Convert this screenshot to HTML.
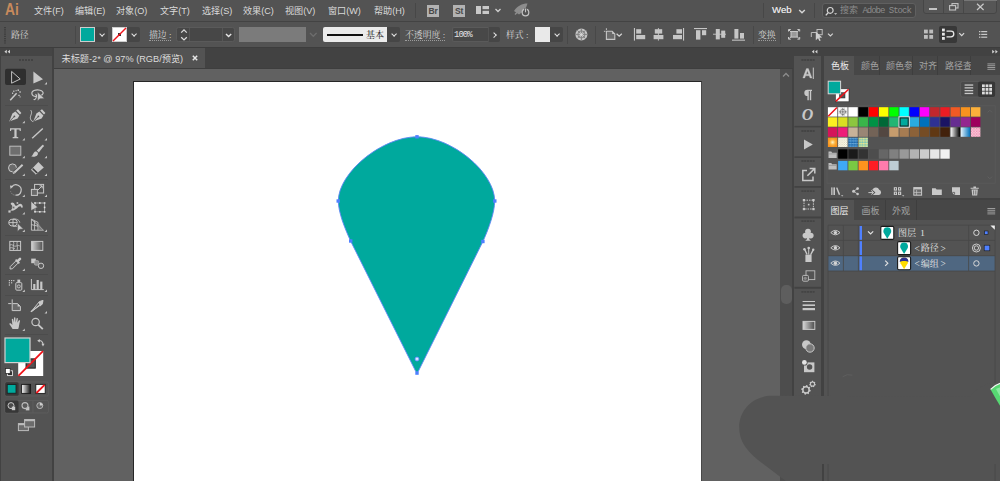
<!DOCTYPE html>
<html lang="zh-CN">
<head>
<meta charset="utf-8">
<title>未标题-2* @ 97% (RGB/预览)</title>
<style>
*{box-sizing:border-box;margin:0;padding:0}
html,body{width:1000px;height:481px;overflow:hidden;background:#535353}
body{position:relative;font-family:"Liberation Sans","Noto Sans CJK SC",sans-serif;font-size:10px;color:#d6d6d6;line-height:1}
.abs{position:absolute}
.t{position:absolute;white-space:nowrap;line-height:12px;height:12px}
/* bars */
#menubar{left:0;top:0;width:1000px;height:21px;background:#535353}
#line1{left:0;top:21px;width:1000px;height:1px;background:#434343}
#ctrlbar{left:0;top:22px;width:1000px;height:25px;background:#535353}
#line2{left:0;top:47px;width:1000px;height:1px;background:#3d3d3d}
#tabrow{left:54px;top:48px;width:741px;height:21px;background:#424242}
#tab{left:54px;top:48px;width:151px;height:21px;background:#535353}
#canvas{left:54px;top:69px;width:727px;height:412px;background:#616161}
#artboard{left:133px;top:81px;width:569.2px;height:410px;background:#fff;border:1px solid #262626;border-right-color:#484848}
#vscroll{left:780.4px;top:69px;width:11.9px;height:413px;background:#4d4d4d}
#vthumb{left:781.2px;top:285px;width:10.4px;height:19px;border-radius:5px;background:#5e5e5e}
/* left toolbar */
#tb-edge{left:0;top:48px;width:54px;height:433px;background:#424242}
#tb-head{left:0;top:48px;width:52px;height:8px;background:#454545}
#tb{left:1px;top:56px;width:51px;height:425px;background:#535353}
.sep{position:absolute;left:5px;width:43px;height:1px;background:#4a4a4a}
/* right dock */
#dock{left:792.2px;top:48px;width:207.8px;height:433px;background:#424242}
#strip{left:794.4px;top:56px;width:26.8px;height:344px;background:#535353}
.sdiv{position:absolute;left:795px;width:27px;height:1px;background:#424242}
#pnl1{left:823.6px;top:56px;width:176.4px;height:142px;background:#535353}
#pnl2{left:823.6px;top:200.4px;width:176.4px;height:281px;background:#535353}
.ptabs{position:absolute;left:823.6px;width:176.4px;height:19px;background:#474747}
.ptab{position:absolute;height:19px;border-right:1px solid #3f3f3f;color:#a9a9a9}
.ptab.on{background:#535353;color:#e6e6e6;border-right:none}
.sw{position:absolute;width:9.4px;height:9.4px}
.ico{position:absolute;overflow:visible}
.mi{top:5px;font-size:9.1px;color:#dadada}
.brst{top:5px;width:12px;height:12px;background:#b2b2b2;color:#484848;font-size:8.5px;font-weight:bold;line-height:12px;text-align:center;letter-spacing:-0.3px}
.wc{top:0;height:14px;background:#4f4f4f;border:1px solid #686868;border-top:none}
.ct{top:29.2px;font-size:8.9px;color:#d6d6d6;font-family:'Liberation Serif','Noto Serif CJK SC',serif}
.ul{border-bottom:1px dotted #9c9c9c;height:11.4px}
.vd{top:26px;width:1px;height:18px;background:#484848}
.dd{top:27.4px;width:13px;height:15px;background:#464646;border-radius:0 2px 2px 0}
.dd::after{content:"";position:absolute;left:4.6px;top:4.4px;width:3.2px;height:3.2px;border-right:1.4px solid #e4e4e4;border-bottom:1.4px solid #e4e4e4;transform:rotate(45deg)}
.fld{top:27.4px;height:15px;background:#484848;border:1px solid #5a5a5a;border-right:none;border-radius:2px 0 0 2px}
.pdv{width:1px;height:19px;background:#3e3e3e}
.pt{font-size:9px;color:#a2a2a2}
.pt.on{color:#ececec}
.lt{font-size:9px;color:#e6e6e6;font-family:'Liberation Serif','Noto Serif CJK SC',serif}
.dd.r::after{left:2.6px;top:5.2px;transform:rotate(-45deg)}
.br{font-size:11px;line-height:9px;display:inline-block;transform:scaleX(0.85);position:relative;top:0.9px}
</style>
</head>
<body>
<!-- ===== top bars ===== -->
<div id="menubar" class="abs"></div>
<div id="line1" class="abs"></div>
<div id="ctrlbar" class="abs"></div>
<div id="line2" class="abs"></div>

<!-- ===== document area ===== -->
<div id="tabrow" class="abs"></div>
<div id="tab" class="abs"></div>
<div id="canvas" class="abs"></div>
<div id="artboard" class="abs"></div>
<div id="vscroll" class="abs"></div>
<div id="vthumb" class="abs"></div>

<!-- ===== left toolbar ===== -->
<div id="tb-edge" class="abs"></div>
<div id="tb-head" class="abs"></div>
<div id="tb" class="abs"></div>

<!-- ===== right dock ===== -->
<div id="dock" class="abs"></div>
<div id="strip" class="abs"></div>
<div id="pnl1" class="abs"></div>
<div id="pnl2" class="abs"></div>

<div class="t" style="left:5px;top:0px;font-size:16px;font-weight:bold;line-height:20px;height:20px;color:#c88a5c;transform:scaleX(0.86);transform-origin:0 0">Ai</div>
<div id="m1" class="t mi" style="left:34px">文件(F)</div>
<div class="t mi" style="left:75px">编辑(E)</div>
<div class="t mi" style="left:116px">对象(O)</div>
<div class="t mi" style="left:160px">文字(T)</div>
<div class="t mi" style="left:202px">选择(S)</div>
<div class="t mi" style="left:243px">效果(C)</div>
<div class="t mi" style="left:285px">视图(V)</div>
<div class="t mi" style="left:328px">窗口(W)</div>
<div class="t mi" style="left:374px">帮助(H)</div>
<div class="abs" style="left:415px;top:3px;width:1px;height:15px;background:#474747"></div>
<div class="abs brst" style="left:427px">Br</div>
<div class="abs brst" style="left:453px">St</div>
<svg class="ico" style="left:476px;top:6px" width="26" height="10" viewBox="0 0 26 10"><rect x="0" y="0" width="5" height="8" fill="#c8c8c8"/><rect x="6.5" y="0" width="6.5" height="3.2" fill="#c8c8c8"/><rect x="6.5" y="4.8" width="6.5" height="3.2" fill="#c8c8c8"/><path d="M19.5 3 L22 5.5 L24.5 3" fill="none" stroke="#d0d0d0" stroke-width="1.3"/></svg>
<svg class="ico" style="left:512.5px;top:2.2px" width="20" height="16" viewBox="0 0 20 16"><path d="M1 9 C4 4 9 1.5 14.5 1.5 C13.5 6 10.5 10 6 12.5 Z" fill="#8d8d8d"/><path d="M2 12.5 L5.5 9" stroke="#8d8d8d" stroke-width="1.4"/><circle cx="12.5" cy="10.5" r="3.3" fill="#535353" stroke="#c4c4c4" stroke-width="1.2"/><path d="M12.5 6.3 V10.3" stroke="#535353" stroke-width="2.6"/><path d="M12.5 6.6 V10.3" stroke="#c4c4c4" stroke-width="1.1"/></svg>
<div class="abs" style="left:763px;top:3px;width:1px;height:15px;background:#474747"></div>
<div class="t" style="left:772px;top:3.8px;font-size:9.6px;color:#e0e0e0;text-shadow:0 0 0.4px #e0e0e0">Web</div>
<svg class="ico" style="left:798px;top:9px" width="9" height="6" viewBox="0 0 9 6"><path d="M1.2 1 L4 3.8 L6.8 1" fill="none" stroke="#d6d6d6" stroke-width="1.4"/></svg>
<div class="abs" style="left:814px;top:3px;width:1px;height:15px;background:#474747"></div>
<div class="abs" style="left:821.6px;top:3px;width:94.6px;height:14.6px;background:#464646;border:1px solid #606060;border-radius:3px"></div>
<svg class="ico" style="left:824.6px;top:5.6px" width="13" height="11" viewBox="0 0 13 11"><circle cx="5.2" cy="4.4" r="2.9" fill="none" stroke="#d6d6d6" stroke-width="1.2"/><path d="M3.2 6.6 L0.8 9.4" stroke="#d6d6d6" stroke-width="1.4"/><path d="M9 7.2 L10.6 8.8 L12.2 7.2" fill="#d6d6d6"/></svg>
<div id="srch" class="t" style="left:840px;top:5px;font-size:9px;color:#8c8c8c;font-family:'Liberation Mono','Noto Sans CJK SC',monospace;letter-spacing:-1px"><span style="letter-spacing:0">搜索</span> Adobe Stock</div>
<div class="abs" style="left:922.8px;top:-1px;width:74.6px;height:15px;background:#565656;border:1px solid #464646;border-radius:0 0 3px 3px"></div>
<div class="abs" style="left:943px;top:0;width:1px;height:13px;background:#474747"></div>
<div class="abs" style="left:962.6px;top:0;width:1px;height:13px;background:#474747"></div>
<div class="abs" style="left:963.6px;top:0;width:33px;height:1.2px;background:#767676"></div>
<div class="abs" style="left:929px;top:8.2px;width:7.6px;height:1.9px;background:#c4c4c4"></div>
<svg class="ico" style="left:948.6px;top:3.4px" width="10" height="8" viewBox="0 0 10 8"><rect x="3" y="0.6" width="6" height="4.4" fill="none" stroke="#c4c4c4" stroke-width="1.1"/><rect x="0.6" y="2.6" width="6" height="4.4" fill="#565656" stroke="#c4c4c4" stroke-width="1.1"/></svg>
<svg class="ico" style="left:976px;top:3px" width="9" height="8" viewBox="0 0 9 8"><path d="M1 0.8 L7.6 7 M7.6 0.8 L1 7" stroke="#c8c8c8" stroke-width="1.2"/></svg>
<svg class="ico" style="left:4px;top:27px" width="3" height="17" viewBox="0 0 3 17"><path d="M1 0 V17" stroke="#3e3e3e" stroke-width="2" stroke-dasharray="1.2 1"/></svg>
<div class="t ct" style="left:11px">路径</div>
<div class="abs vd" style="left:75px"></div>
<div class="abs" style="left:80px;top:27.4px;width:15px;height:15px;background:#00a99d;border:1px solid #cdcdcd"></div>
<div class="abs dd" style="left:95px"></div>
<div class="abs" style="left:112px;top:27.4px;width:15px;height:15px;background:#fff;border:1px solid #cdcdcd"></div>
<svg class="ico" style="left:112px;top:27.4px" width="15" height="15" viewBox="0 0 15 15"><rect x="6" y="6" width="3" height="3" fill="#333"/><path d="M1 14 L14 1" stroke="#f0131a" stroke-width="1.5"/></svg>
<div class="abs dd" style="left:127px"></div>
<div class="t ct ul" style="left:149px">描边 :</div>
<div class="abs" style="left:176.3px;top:27.4px;width:58.9px;height:15px;background:#474747;border:1px solid #5a5a5a;border-radius:2.5px"></div>
<div class="abs" style="left:189.2px;top:28.4px;width:1px;height:13px;background:#565656"></div>
<div class="abs" style="left:222.2px;top:28.4px;width:1px;height:13px;background:#565656"></div>
<svg class="ico" style="left:179.6px;top:28.4px" width="8" height="15" viewBox="0 0 8 15"><path d="M1.2 4.6 L4 1.9 L6.8 4.6 M1.2 9.2 L4 11.9 L6.8 9.2" fill="none" stroke="#dcdcdc" stroke-width="1.3"/></svg>
<svg class="ico" style="left:224.6px;top:32.6px" width="8" height="6" viewBox="0 0 8 6"><path d="M1 1 L3.6 3.6 L6.2 1" fill="none" stroke="#e4e4e4" stroke-width="1.4"/></svg>
<div class="abs" style="left:239px;top:27.4px;width:67px;height:15px;background:#7b7b7b"></div>
<svg class="ico" style="left:309px;top:32.4px" width="9" height="6" viewBox="0 0 9 6"><path d="M1 1 L4.3 4.3 L7.6 1" fill="none" stroke="#6d6d6d" stroke-width="1.3"/></svg>
<div class="abs" style="left:323px;top:27.4px;width:64px;height:15px;background:#ebebeb;border-radius:2px 0 0 2px"></div>
<div class="abs" style="left:327px;top:34.2px;width:36px;height:2px;background:#111"></div>
<div class="t" style="left:366px;top:29.2px;font-size:9px;color:#222;font-family:'Liberation Serif','Noto Serif CJK SC',serif">基本</div>
<div class="abs dd" style="left:387px"></div>
<div class="t ct ul" style="left:405px">不透明度 :</div>
<div class="abs fld" style="left:452px;width:36px"></div>
<div class="t" style="left:454px;top:28.6px;font-size:9px;color:#e2e2e2;font-family:'Liberation Mono',monospace;letter-spacing:-1px">100%</div>
<div class="abs dd r" style="left:489px;width:11px"></div>
<div class="t ct" style="left:506px">样式 :</div>
<div class="abs" style="left:535px;top:27.4px;width:15px;height:15px;background:#e9e9e9"></div>
<div class="abs dd" style="left:550px"></div>
<div class="abs vd" style="left:567px"></div>
<div class="abs vd" style="left:595px"></div>
<div class="t ct ul" style="left:758px">变换</div>
<div class="abs vd" style="left:753px"></div><div class="abs vd" style="left:780px"></div>
<div class="abs" style="left:939.4px;top:26px;width:18px;height:16.6px;background:#383838;border-radius:2px"></div>

<div id="tabtxt" class="t" style="left:61.5px;top:52.6px;font-size:9.2px;color:#dcdcdc">未标题-2* @ 97% (RGB/预览)</div>
<svg class="ico" style="left:192px;top:55px" width="6" height="6" viewBox="0 0 6 6"><path d="M0.8 0.8 L5.2 5.2 M5.2 0.8 L0.8 5.2" stroke="#e6e6e6" stroke-width="1.5"/></svg>
<div class="abs" style="left:54px;top:68px;width:739px;height:1px;background:#3e3e3e"></div>
<svg class="ico" style="left:782.4px;top:72px" width="8" height="6" viewBox="0 0 8 6"><path d="M1 4.5 L4 1.5 L7 4.5" fill="none" stroke="#8c8c8c" stroke-width="1.3"/></svg>

<svg class="abs" style="left:0;top:0" width="1000" height="481" viewBox="0 0 1000 481">
<path d="M417 136.8 C452 136.8 494.7 172.5 494.7 201 C494.7 212 489 228 483 241.3 L418.2 371.5 Q417 373.4 415.8 371.5 L350.6 241 C344.6 228 338.3 212 338.3 201 C338.3 172.5 382 136.8 417 136.8 Z" fill="#00a99d" stroke="#5d86f5" stroke-width="0.9"/>
<g fill="#4f80ff">
<rect x="415.3" y="135.1" width="3.4" height="3.4"/>
<rect x="336.5" y="199.3" width="3.4" height="3.4"/>
<rect x="493.1" y="199.3" width="3.4" height="3.4"/>
<rect x="349" y="239.3" width="3.4" height="3.4"/>
<rect x="481.2" y="239.8" width="3.4" height="3.4"/>
<rect x="415.3" y="371.4" width="3.4" height="3.4"/>
</g>
<circle cx="417" cy="359" r="2" fill="#fff" stroke="#4f80ff" stroke-width="0.9"/>
<circle cx="417" cy="359" r="0.6" fill="#4f80ff"/>
</svg>
<svg class="ico" style="left:560px;top:20px" width="440" height="30" viewBox="560 20 440 30">
<!-- globe -->
<circle cx="581.4" cy="34.4" r="6" fill="#c4c4c4"/>
<g stroke="#7d7d7d" stroke-width="0.9" fill="none"><circle cx="581.4" cy="34.4" r="3.6"/><path d="M575.4 34.4 H587.4 M581.4 28.4 V40.4 M577.2 30.2 L585.6 38.6 M585.6 30.2 L577.2 38.6"/></g>
<circle cx="581.4" cy="34.4" r="1.5" fill="#d8d8d8"/>
<!-- artboard -->
<path d="M606.4 31.3 H612.2 L614.8 33.9 V39.4 H606.4 Z" fill="#6b6b6b" stroke="#c6c6c6" stroke-width="1.1"/>
<path d="M612.2 31.3 V33.9 H614.8 Z" fill="#c6c6c6"/>
<rect x="605.9" y="28.2" width="1" height="1.8" fill="#bdbdbd"/><rect x="603.9" y="30.8" width="1.5" height="1" fill="#bdbdbd"/>
<path d="M616.6 33.8 L619.2 36.2 L621.8 33.8" fill="none" stroke="#d4d4d4" stroke-width="1.3"/>
<!-- align icons -->
<g fill="#c6c6c6">
<rect x="633.9" y="28" width="1.1" height="12.6"/><rect x="636.2" y="29.2" width="5" height="4.4"/><rect x="636.2" y="35" width="9" height="4.2"/>
<rect x="657.9" y="28" width="1.1" height="12.6" fill="#b0b0b0"/><rect x="654.8" y="29.2" width="7.4" height="4.4"/><rect x="653.6" y="35" width="9.8" height="4.2"/>
<rect x="683" y="28" width="1.1" height="12.6"/><rect x="676.4" y="29.2" width="5.6" height="4.4"/><rect x="673" y="35" width="9" height="4.2"/>
<rect x="694" y="28" width="13" height="1.1"/><rect x="696" y="30.2" width="4.4" height="9.4"/><rect x="702" y="30.2" width="4.2" height="5"/>
<rect x="713" y="33.7" width="13" height="1.1" fill="#b0b0b0"/><rect x="715.8" y="29" width="4" height="10.4"/><rect x="721.2" y="30.6" width="4" height="7.2"/>
<rect x="732" y="39.6" width="13" height="1.1"/><rect x="734.4" y="29" width="4" height="9.6"/><rect x="740" y="33" width="4" height="5.6"/>
</g>
<!-- isolate -->
<g fill="none" stroke="#c9c9c9" stroke-width="1"><rect x="791" y="31.5" width="6.2" height="5.6" fill="#9a9a9a"/><path d="M788.5 31.5 V29.5 H790.8 M797.4 29.5 H799.7 V31.5 M788.5 37 V39.2 H790.8 M797.4 39.2 H799.7 V37 M789 30 L791 32 M799.2 30 L797.2 32 M789 38.7 L791 36.8 M799.2 38.7 L797.2 36.8"/></g>
<!-- select similar -->
<g fill="none" stroke="#bcbcbc" stroke-width="1"><rect x="817" y="29.5" width="5.2" height="5.2"/><path d="M811.3 32.5 H816.5 M811.3 32.5 V37"/></g>
<path d="M815.8 31.6 V40.2 L818 38.2 L819.4 41 L820.7 40.4 L819.4 37.7 L822.2 37.6 Z" fill="#cfcfcf"/>
<path d="M828 33.6 L830.4 36 L832.8 33.6" fill="none" stroke="#d4d4d4" stroke-width="1.2"/>
<!-- right icons -->
<g fill="#bdbdbd"><rect x="924" y="29.6" width="3.8" height="3.8"/><rect x="929.3" y="29.6" width="3.8" height="3.8"/><rect x="924" y="35" width="3.8" height="3.8"/><rect x="929.3" y="35" width="3.8" height="3.8"/></g>
<g fill="#e8e8e8"><rect x="942" y="28.6" width="2.8" height="2.8"/><rect x="942" y="32.8" width="2.8" height="2.8"/><rect x="942" y="37" width="2.8" height="2.8"/></g>
<path d="M946.5 31.2 H951 A2.8 2.8 0 0 1 951 36.8 H946.5" fill="none" stroke="#e8e8e8" stroke-width="1.3"/>
<path d="M959.3 33.2 L961.7 35.6 L964.1 33.2" fill="none" stroke="#d8d8d8" stroke-width="1.2"/>
<g fill="#c9c9c9"><rect x="979" y="31" width="1.4" height="1.2"/><rect x="981.2" y="31" width="6" height="1.2"/><rect x="979" y="33.8" width="1.4" height="1.2"/><rect x="981.2" y="33.8" width="6" height="1.2"/><rect x="979" y="36.6" width="1.4" height="1.2"/><rect x="981.2" y="36.6" width="6" height="1.2"/></g>
</svg>
<svg class="ico" style="left:0;top:0" width="56" height="481" viewBox="0 0 56 481">
<!-- header -->
<path d="M6.8 49.8 L4.4 51.7 L6.8 53.6 Z M10 49.8 L7.6 51.7 L10 53.6 Z" fill="#d2d2d2"/>
<path d="M19 60 H33" stroke="#434343" stroke-width="2" stroke-dasharray="2 1"/>
<!-- separators -->
<g stroke="#4c4c4c" stroke-width="1"><path d="M5 105.5 H48 M5 179.5 H48 M5 235.5 H48 M5 274.5 H48 M5 295.5 H48 M5 334.5 H48"/></g>
<!-- selected bg -->
<rect x="5" y="68.8" width="21" height="16.2" rx="2" fill="#2f2f2f"/>
<g fill="#c4c4c4">
<path d="M47 84.6 H44.5 L47 82.1 Z"/><path d="M24.8 123.2 H22.3 L24.8 120.7 Z"/><path d="M24.8 140.6 H22.3 L24.8 138.1 Z"/><path d="M47 140.6 H44.5 L47 138.1 Z"/><path d="M24.8 158.3 H22.3 L24.8 155.8 Z"/><path d="M47 158.3 H44.5 L47 155.8 Z"/><path d="M24.8 176 H22.3 L24.8 173.5 Z"/><path d="M47 176 H44.5 L47 173.5 Z"/>
<path d="M24.8 197 H22.3 L24.8 194.5 Z"/><path d="M47 197 H44.5 L47 194.5 Z"/><path d="M24.8 214.4 H22.3 L24.8 211.9 Z"/><path d="M24.8 232 H22.3 L24.8 229.5 Z"/><path d="M47 232 H44.5 L47 229.5 Z"/><path d="M24.8 271 H22.3 L24.8 268.5 Z"/><path d="M24.8 292 H22.3 L24.8 289.5 Z"/><path d="M47 292 H44.5 L47 289.5 Z"/><path d="M47 313.6 H44.5 L47 311.1 Z"/><path d="M24.8 331 H22.3 L24.8 328.5 Z"/>
</g>
<!-- selection tool -->
<path d="M11.6 71.4 V83.2 L20.2 79 Z" fill="none" stroke="#c2c2c2" stroke-width="1" stroke-linejoin="round"/>
<!-- direct selection -->
<path d="M33.4 71.4 V83.6 L43 79.2 Z" fill="#c8c8c8"/>
<!-- magic wand -->
<path d="M10.2 100.2 L16.6 93.2" stroke="#c8c8c8" stroke-width="1.5"/>
<g fill="#dadada"><rect x="13.2" y="90.6" width="1.2" height="1.2"/><rect x="12" y="92.6" width="1.2" height="1.2"/><rect x="17.6" y="89.4" width="1.2" height="1.6"/><rect x="19.4" y="91.4" width="1.4" height="1.2"/><rect x="18.4" y="94.8" width="1.2" height="1.2"/><rect x="15.6" y="90.2" width="1" height="1"/><rect x="19.6" y="96.4" width="1" height="1"/></g>
<!-- lasso -->
<path d="M36 96.6 C31.5 96.4 30.4 92.4 34 90.6 C37.6 89 43.4 90.2 43.2 93.2 C43 94.6 41.6 95.4 40 95.8 M35.4 94.4 C36.6 94.6 36.8 96 36.2 97.6 C35.8 99 34.6 100 33.6 99.4" fill="none" stroke="#c8c8c8" stroke-width="1.1"/>
<path d="M37.6 92 V101 L39.8 98.8 L44.4 98.6 Z" fill="#c8c8c8" stroke="#535353" stroke-width="0.5"/>
<!-- pen -->
<g><path d="M9.2 121.6 L12.4 113.4 L15.4 111.4 L19.4 115.6 L17.6 118.6 Z" fill="#c8c8c8"/><path d="M9.6 121.2 L14 116.8" stroke="#535353" stroke-width="0.9"/><circle cx="14.4" cy="116.4" r="0.9" fill="#535353"/><path d="M16.2 110.6 L18 109.2 L21.4 113 L20 114.6 Z" fill="#c8c8c8"/></g>
<g transform="translate(24 0)"><path d="M9.2 121.6 L12.4 113.4 L15.4 111.4 L19.4 115.6 L17.6 118.6 Z" fill="#c8c8c8"/><path d="M9.6 121.2 L14 116.8" stroke="#535353" stroke-width="0.9"/><circle cx="14.4" cy="116.4" r="0.9" fill="#535353"/><path d="M16.2 110.6 L18 109.2 L21.4 113 L20 114.6 Z" fill="#c8c8c8"/></g>
<path d="M30.8 110.2 C33 113.2 29.8 115.6 30.4 118.4 C30.8 120.4 32 121.4 33.2 121.6" fill="none" stroke="#c8c8c8" stroke-width="1"/>
<!-- T -->
<path d="M10 128.2 H20.8 V131 H19.8 L19.4 129.6 H16.6 V136.8 L18.3 137.3 V138.3 H12.6 V137.3 L14.4 136.8 V129.6 H11.4 L11 131 H10 Z" fill="#c8c8c8"/>
<!-- line -->
<path d="M32.2 138.2 L42.8 128.4" stroke="#c8c8c8" stroke-width="1.4"/>
<!-- rect -->
<rect x="9.8" y="146.2" width="11" height="9" fill="#6e6e6e" stroke="#bdbdbd" stroke-width="1"/>
<!-- brush -->
<path d="M36.8 150.4 L42.6 144.8 Q44 144.6 43.6 146.2 L38.8 152.6 Z" fill="#c8c8c8"/>
<path d="M31.2 156.6 C33 155.8 33 152.8 35 151.6 C36.8 150.8 38.6 152.6 37.8 154.4 C36.6 156.8 33.4 157 31.2 156.6 Z" fill="#c8c8c8"/>
<!-- shaper -->
<circle cx="12.5" cy="167.9" r="4" fill="#6a6a6a" stroke="#c8c8c8" stroke-width="1"/>
<path d="M14 172.6 L22.6 164.6" stroke="#535353" stroke-width="3.6"/>
<path d="M14.4 172.4 L22.6 164.8" stroke="#c8c8c8" stroke-width="2"/>
<path d="M12.8 174 L13.6 171.6 L15.2 173.2 Z" fill="#c8c8c8"/>
<!-- eraser -->
<path d="M38.4 162 L43.8 167.4 L36 174.2 L31.2 169.6 Z" fill="#c8c8c8"/>
<path d="M33.2 168 L37.8 172.4 L36.6 173.4 L32 169 Z" fill="#3c3c3c"/>
<path d="M31.2 169.6 L36 174.2 L36.8 173.4" fill="none" stroke="#c8c8c8" stroke-width="0.8"/>
<!-- rotate -->
<path d="M11.6 187.2 A5.2 5.2 0 1 1 15.6 195.2" fill="none" stroke="#c8c8c8" stroke-width="1.2"/>
<path d="M15.6 195.2 A5.2 5.2 0 0 1 10.6 191.4" fill="none" stroke="#9a9a9a" stroke-width="1" stroke-dasharray="1 1"/>
<path d="M10 185.4 L13.4 186 L10.6 189 Z" fill="#c8c8c8"/>
<!-- scale -->
<rect x="34.6" y="184.4" width="9" height="8.6" fill="none" stroke="#c8c8c8" stroke-width="1"/>
<rect x="31.4" y="189.4" width="6" height="6" fill="#6a6a6a" stroke="#c8c8c8" stroke-width="1"/>
<path d="M38 190 L42 186 M39.6 185.8 H42.2 V188.4" fill="none" stroke="#c8c8c8" stroke-width="1"/>
<!-- width/warp -->
<path d="M10 211.2 C12 209.4 12.8 207.4 12.2 205.8 C11.6 204.6 10.4 204.4 10.8 203.2 C12 201.8 14.2 202.8 14.8 204.8 C15.6 206.6 17 205.4 18.4 204.4 C20.6 203 23 204.4 22.8 207.6 L21.4 207.8 C21.2 206 19.8 205.8 18.6 206.8 C16.6 208.8 14.6 211 11.6 210.6 Z" fill="#c8c8c8"/>
<circle cx="13.5" cy="207.5" r="1.2" fill="#6a6a6a" stroke="#c8c8c8" stroke-width="0.6"/>
<rect x="8.4" y="210.4" width="2.2" height="2.2" fill="#c8c8c8"/>
<rect x="16.6" y="202.2" width="1.6" height="1.6" fill="#c8c8c8"/>
<!-- free transform -->
<rect x="35" y="203" width="9.6" height="8.8" fill="none" stroke="#b4b4b4" stroke-width="0.9"/>
<g fill="#e0e0e0"><rect x="34.2" y="202.2" width="1.6" height="1.6"/><rect x="43.8" y="202.2" width="1.6" height="1.6"/><rect x="34.2" y="211" width="1.6" height="1.6"/><rect x="43.8" y="211" width="1.6" height="1.6"/><rect x="39" y="211" width="1.6" height="1.6"/><rect x="39" y="202.2" width="1.6" height="1.6"/><rect x="43.8" y="206.6" width="1.6" height="1.6"/></g>
<path d="M31 201.2 V210.6 L37.6 207.2 Z" fill="#c8c8c8" stroke="#535353" stroke-width="0.5"/>
<!-- shape builder -->
<ellipse cx="13" cy="222.6" rx="4.2" ry="3.4" fill="none" stroke="#c8c8c8" stroke-width="1"/>
<path d="M13 219.2 C16 218.4 19.6 220 19.8 222.6 M13 226 C14.4 226.6 16.4 226.6 17.4 226 M13 219.2 V226 M8.8 222.6 H17.2" fill="none" stroke="#c8c8c8" stroke-width="0.9"/>
<path d="M17.6 223.2 V231.4 L19.8 229.2 L23.4 229 Z" fill="#c8c8c8" stroke="#535353" stroke-width="0.5"/>
<!-- perspective grid -->
<path d="M31.4 219.2 V230.2 H43.4 Z M31.4 219.2 L38 222.4 V230.2 M31.4 224.6 L38 226.2 M34.6 220.8 V230.2" fill="none" stroke="#c8c8c8" stroke-width="0.9"/>
<path d="M38 222.6 L43.4 230.2 H38 Z" fill="#8a8a8a" opacity="0.7"/>
<!-- mesh -->
<rect x="9.8" y="241.4" width="10.8" height="9" fill="none" stroke="#c8c8c8" stroke-width="1"/>
<path d="M9.8 245 C12.6 243.4 14 247.4 16.4 246 C18.2 245 19.2 245.6 20.6 246.4 M13.4 241.4 C14.8 244 12.2 246.6 13.6 250.4 M17.4 241.4 C16 243.6 18.4 247 17 250.4 M9.8 248 C12 247 13 248.6 15 248.4" fill="none" stroke="#c8c8c8" stroke-width="0.8"/>
<!-- gradient -->
<defs><linearGradient id="gr1" x1="0" x2="1" y1="0" y2="0"><stop offset="0" stop-color="#d2d2d2"/><stop offset="1" stop-color="#505050"/></linearGradient></defs>
<rect x="31.6" y="241.4" width="11.2" height="9" fill="url(#gr1)" stroke="#c8c8c8" stroke-width="1"/>
<!-- eyedropper -->
<path d="M10 269 L10.2 266.6 L16.4 260.4 L18.6 262.6 L12.4 268.8 Z" fill="#5c5c5c" stroke="#c8c8c8" stroke-width="1"/>
<path d="M15.6 259.6 L19.4 263.4" stroke="#c8c8c8" stroke-width="1.6"/>
<path d="M17.6 261.2 L20 258.8" stroke="#c8c8c8" stroke-width="2.6" stroke-linecap="round"/>
<!-- blend -->
<rect x="31.2" y="258.6" width="4.6" height="4.6" fill="#c8c8c8"/>
<rect x="34.4" y="260.6" width="4.4" height="4.6" rx="1.4" fill="#8e8e8e" stroke="#b4b4b4" stroke-width="0.7"/>
<circle cx="41" cy="265.8" r="2.7" fill="#5a5a5a" stroke="#c8c8c8" stroke-width="1"/>
<!-- symbol sprayer -->
<rect x="15.8" y="282.6" width="6" height="7.6" rx="1" fill="#5c5c5c" stroke="#c8c8c8" stroke-width="1"/>
<rect x="17.4" y="279.6" width="2.8" height="2.4" fill="#c8c8c8"/>
<circle cx="18.8" cy="286.4" r="1.5" fill="none" stroke="#c8c8c8" stroke-width="0.9"/>
<g fill="#c8c8c8"><rect x="8.8" y="280" width="1.2" height="1.2"/><rect x="11" y="280" width="1.2" height="1.2"/><rect x="13.2" y="280" width="1.2" height="1.2"/><rect x="8.8" y="282.2" width="1.2" height="1.2"/><rect x="11" y="282.2" width="1.2" height="1.2"/><rect x="8.8" y="284.4" width="1.2" height="1.2"/></g>
<!-- graph -->
<path d="M31.4 279 V289.6 H43.8" fill="none" stroke="#c8c8c8" stroke-width="1"/>
<g fill="#c8c8c8"><rect x="33.2" y="284" width="2.2" height="5.6"/><rect x="36.6" y="280" width="2.2" height="9.6"/><rect x="40.2" y="281.6" width="2.2" height="8"/></g>
<!-- artboard tool -->
<path d="M12.2 303.6 H17.6 L20.4 306.4 V310.6 H12.2 Z" fill="#6a6a6a" stroke="#c8c8c8" stroke-width="1"/>
<path d="M17.6 303.6 V306.4 H20.4 Z" fill="#c8c8c8"/>
<path d="M12.2 299.4 V303 M8.2 303.6 H11.6" stroke="#c8c8c8" stroke-width="1"/>
<!-- slice -->
<path d="M31 311.8 L39.4 301.6 L43 300.4 L42.4 303.6 Z" fill="none" stroke="#c8c8c8" stroke-width="1"/>
<path d="M38.4 302 L43.2 300.2 L42.6 304.2 L40 306.4 Z" fill="#c8c8c8"/>
<path d="M31 311.8 L40 304.6" stroke="#c8c8c8" stroke-width="1.2"/>
<!-- hand -->
<path d="M12.6 329 C11.4 326.8 10.2 325.2 9.4 324.2 C9.2 323.2 10.4 323 11.2 323.8 L12.4 325 L11.8 319.6 C11.8 318.6 13 318.6 13.2 319.6 L13.8 322.6 L14 318 C14.2 317 15.4 317 15.4 318 L15.6 322.4 L16.6 318.6 C16.8 317.8 18 318 17.8 319 L17.4 322.8 L18.8 320.6 C19.4 319.8 20.4 320.4 20 321.2 C19.2 323.4 19.2 326.6 18.2 329 Z" fill="#c8c8c8"/>
<!-- fill/stroke -->
<rect x="18.2" y="351" width="25" height="25" fill="#fff"/>
<rect x="25.6" y="358.4" width="10.2" height="10.2" fill="#535353"/>
<rect x="26.2" y="359" width="9" height="9" fill="none" stroke="#222" stroke-width="0.8"/>
<path d="M18.4 375.8 L43 351.2" stroke="#f0131a" stroke-width="1.8"/>
<rect x="5" y="338" width="25" height="24.6" fill="#00a99d" stroke="#d2d2d2" stroke-width="1.2"/>
<path d="M38.4 340.6 C40.6 340 42.8 341.4 43 344.4" fill="none" stroke="#c8c8c8" stroke-width="1.1"/>
<path d="M37.2 340.8 L39.8 339 L39.8 342.6 Z M41.4 343.8 L44.6 343.8 L43 346.4 Z" fill="#c8c8c8"/>
<rect x="7.6" y="370.8" width="4.8" height="4.8" fill="#2a2a2a" stroke="#e8e8e8" stroke-width="0.9"/>
<rect x="5.4" y="368.6" width="4.8" height="4.8" fill="#fff" stroke="#222" stroke-width="0.7"/>
<!-- color mode buttons -->
<rect x="5" y="382" width="43.4" height="14" rx="1.5" fill="none" stroke="#5f5f5f" stroke-width="0.8"/>
<rect x="5.2" y="382.2" width="13.4" height="13.6" rx="1.5" fill="#373737"/>
<rect x="7.2" y="384.6" width="8.8" height="8.6" fill="#00a99d" stroke="#1a1a1a" stroke-width="0.8"/>
<defs><linearGradient id="gr2" x1="0" x2="1" y1="0" y2="0"><stop offset="0" stop-color="#fff"/><stop offset="1" stop-color="#111"/></linearGradient></defs>
<rect x="21.6" y="384.4" width="9" height="9" fill="url(#gr2)" stroke="#1a1a1a" stroke-width="0.9"/>
<rect x="35.8" y="384.4" width="9.4" height="9" fill="#fff" stroke="#1a1a1a" stroke-width="0.9"/>
<path d="M36.4 393 L44.6 384.8" stroke="#f0131a" stroke-width="1.8"/>
<!-- draw modes -->
<rect x="5" y="400.4" width="43.4" height="12.6" rx="1.5" fill="none" stroke="#5f5f5f" stroke-width="0.8"/>
<path d="M18.6 400.6 V412.8 M33 400.6 V412.8" stroke="#5f5f5f" stroke-width="0.8"/>
<rect x="5.2" y="400.6" width="13.4" height="12.2" rx="1.5" fill="#373737"/>
<circle cx="11" cy="405.6" r="3" fill="#4a4a4a" stroke="#c8c8c8" stroke-width="1"/><rect x="11.8" y="406.6" width="3.4" height="3.6" fill="#c8c8c8"/>
<rect x="25.8" y="406.6" width="3.6" height="3.8" fill="#c4c4c4"/><circle cx="25" cy="405.6" r="3" fill="#5a5a5a" stroke="#bcbcbc" stroke-width="1.1"/>
<circle cx="39.8" cy="405.6" r="3" fill="#666" stroke="#b4b4b4" stroke-width="1"/><path d="M39.8 405.6 V402.8 A2.8 2.8 0 0 1 42.6 405.6 Z" fill="#cfcfcf"/>
<!-- screen mode -->
<rect x="18.4" y="423.6" width="10" height="7" fill="#6c6c6c" stroke="#bcbcbc" stroke-width="1"/>
<rect x="18.4" y="423.6" width="10" height="1.6" fill="#bcbcbc"/>
<rect x="24.6" y="419.6" width="10" height="7.4" fill="#6c6c6c" stroke="#bcbcbc" stroke-width="1"/>
<rect x="24.6" y="419.6" width="10" height="1.6" fill="#bcbcbc"/>
<!-- zoom -->
<circle cx="35.6" cy="322" r="3.7" fill="none" stroke="#c8c8c8" stroke-width="1.2"/>
<path d="M38.4 324.8 L42.8 329.2" stroke="#c8c8c8" stroke-width="1.8"/>
</svg>

<svg class="ico" style="left:0;top:0" width="1000" height="481" viewBox="0 0 1000 481">
<path d="M814.2 49.8 L811.8 51.7 L814.2 53.6 Z M817.4 49.8 L815 51.7 L817.4 53.6 Z" fill="#d2d2d2"/>
<path d="M992.2 49.8 L994.6 51.7 L992.2 53.6 Z M995.4 49.8 L997.8 51.7 L995.4 53.6 Z" fill="#d2d2d2"/>
<g fill="#424242"><rect x="794.4" y="125.9" width="26.8" height="1.5"/><rect x="794.4" y="156.3" width="26.8" height="1.7"/><rect x="794.4" y="186" width="26.8" height="1.8"/><rect x="794.4" y="216.5" width="26.8" height="1.9"/><rect x="794.4" y="286.8" width="26.8" height="1.9"/></g>
<path d="M801.4 60 H814.6" stroke="#444" stroke-width="1.8" stroke-dasharray="2.2 0.6"/><path d="M801.4 131 H814.6" stroke="#444" stroke-width="1.8" stroke-dasharray="2.2 0.6"/><path d="M801.4 161 H814.6" stroke="#444" stroke-width="1.8" stroke-dasharray="2.2 0.6"/><path d="M801.4 191.2 H814.6" stroke="#444" stroke-width="1.8" stroke-dasharray="2.2 0.6"/><path d="M801.4 221.2 H814.6" stroke="#444" stroke-width="1.8" stroke-dasharray="2.2 0.6"/><path d="M801.4 291.8 H814.6" stroke="#444" stroke-width="1.8" stroke-dasharray="2.2 0.6"/>
<!-- A| -->
<path d="M802.8 78 L806.4 68.6 H808.4 L812 78 H810 L809.2 75.8 H805.6 L804.8 78 Z M806.2 74.2 H808.6 L807.4 70.8 Z" fill="#c8c8c8" stroke="#c8c8c8" stroke-width="0.3"/>
<rect x="812.8" y="67.6" width="1" height="11.4" fill="#c8c8c8"/>
<!-- pilcrow -->
<path d="M807.4 96 A3.1 3.1 0 0 1 807.4 89.8 H812 V91 H811.2 V100.2 H809.8 V91 H808.8 V100.2 H807.4 Z" fill="#c8c8c8"/>
<!-- O italic -->
<text x="801.8" y="120.4" font-family="'Liberation Serif',serif" font-style="italic" font-weight="bold" font-size="16" fill="#c8c8c8">O</text>
<!-- play -->
<path d="M804 139.6 V149.4 L812.8 144.5 Z" fill="#c8c8c8"/>
<!-- export -->
<path d="M807 170.4 H802.8 V180.4 H813 V176.4" fill="none" stroke="#c8c8c8" stroke-width="1.5"/>
<path d="M807.4 175.8 L814.6 168.6 M809.6 168.4 H814.8 V173.6" fill="none" stroke="#c8c8c8" stroke-width="1.5"/>
<!-- transform -->
<rect x="804" y="200.2" width="9.4" height="8.8" fill="none" stroke="#c8c8c8" stroke-width="1" stroke-dasharray="1.5 1"/>
<g fill="#c8c8c8"><rect x="802.8" y="199" width="2.2" height="2.2"/><rect x="812.4" y="199" width="2.2" height="2.2"/><rect x="802.8" y="208" width="2.2" height="2.2"/><rect x="812.4" y="208" width="2.2" height="2.2"/><rect x="807.9" y="203.8" width="1.6" height="1.6"/></g>
<!-- club -->
<g fill="#c8c8c8"><circle cx="808" cy="231.6" r="2.9"/><circle cx="805.4" cy="235.6" r="2.8"/><circle cx="810.8" cy="235.6" r="2.8"/><path d="M807.4 234 H808.8 L809.4 239.6 L811 240.8 H805.2 L806.8 239.6 Z"/></g>
<!-- brushes cup -->
<g fill="#c8c8c8"><path d="M805.4 254.6 H811.6 V262 H805.4 Z"/><path d="M806.4 254.8 L804 249.4 L805 248.6 L807.6 254 Z M808.2 254.6 V247.4 H809.2 V254.6 Z M810 254.6 L812.6 249.6 L813.8 250.4 L811.2 255 Z"/><circle cx="804.4" cy="249.2" r="1.2"/><circle cx="808.7" cy="248" r="1.3"/><circle cx="813.2" cy="249.8" r="1.2"/></g>
<!-- symbols -->
<rect x="806" y="270.8" width="8.8" height="8.8" fill="none" stroke="#bcbcbc" stroke-width="0.9"/>
<rect x="802.6" y="275.4" width="5.8" height="5.8" rx="1" fill="#535353" stroke="#c4c4c4" stroke-width="0.9"/>
<circle cx="805.3" cy="278.3" r="1.6" fill="#8a8a8a"/>
<!-- stroke -->
<g fill="#c8c8c8"><rect x="802.6" y="301" width="12.4" height="1"/><rect x="802.6" y="304.4" width="12.4" height="1.6"/><rect x="802.6" y="308" width="12.4" height="2.2"/></g>
<!-- gradient -->
<defs><linearGradient id="gr3" x1="0" x2="1" y1="0" y2="0"><stop offset="0" stop-color="#d6d6d6"/><stop offset="1" stop-color="#4c4c4c"/></linearGradient></defs>
<rect x="803" y="321.4" width="11.8" height="8" fill="url(#gr3)" stroke="#c8c8c8" stroke-width="1"/>
<!-- transparency -->
<circle cx="806.4" cy="344.6" r="4.4" fill="#c8c8c8"/>
<circle cx="810" cy="348" r="4.2" fill="#7a7a7a" stroke="#c8c8c8" stroke-width="1"/>
<!-- appearance -->
<rect x="804" y="362.4" width="10.4" height="9.8" fill="#c8c8c8"/>
<circle cx="809.6" cy="367" r="2.7" fill="#535353"/>
<circle cx="804.4" cy="362.4" r="3.2" fill="#535353"/>
<circle cx="804.4" cy="362.4" r="2.4" fill="#e4e4e4"/>
<!-- gears -->
<path d="M810.78 390.38 L810.60 391.28 L809.38 391.72 L808.97 392.33 L809.04 393.62 L808.27 394.13 L807.11 393.58 L806.38 393.72 L805.52 394.68 L804.62 394.50 L804.18 393.28 L803.57 392.87 L802.28 392.94 L801.77 392.17 L802.32 391.01 L802.18 390.28 L801.22 389.42 L801.40 388.52 L802.62 388.08 L803.03 387.47 L802.96 386.18 L803.73 385.67 L804.89 386.22 L805.62 386.08 L806.48 385.12 L807.38 385.30 L807.82 386.52 L808.43 386.93 L809.72 386.86 L810.23 387.63 L809.68 388.79 L809.82 389.52 Z" fill="#c8c8c8"/><circle cx="806" cy="389.9" r="2.4" fill="#535353"/>
<path d="M815.78 384.43 L815.60 385.23 L814.75 385.48 L814.34 385.99 L814.29 386.87 L813.55 387.23 L812.83 386.72 L812.17 386.72 L811.45 387.23 L810.71 386.87 L810.66 385.99 L810.25 385.48 L809.40 385.23 L809.22 384.43 L809.87 383.84 L810.02 383.20 L809.68 382.38 L810.20 381.74 L811.07 381.88 L811.66 381.60 L812.09 380.83 L812.91 380.83 L813.34 381.60 L813.93 381.88 L814.80 381.74 L815.32 382.38 L814.98 383.20 L815.13 383.84 Z" fill="#c8c8c8"/><circle cx="812.5" cy="384.1" r="1.5" fill="#535353"/>
</svg>

<div class="ptabs" style="top:56px"></div>
<div class="ptab on" style="left:823.6px;top:56px;width:30.4px"></div>
<div class="abs pdv" style="left:879px;top:56px"></div><div class="abs pdv" style="left:912px;top:56px"></div><div class="abs pdv" style="left:937px;top:56px"></div><div class="abs pdv" style="left:970px;top:56px"></div>
<div class="t pt on" style="left:831px;top:60px">色板</div>
<div class="t pt" style="left:861px;top:60px;width:18px;overflow:hidden">颜色</div>
<div class="t pt" style="left:886px;top:60px;width:26px;overflow:hidden">颜色参</div>
<div class="t pt" style="left:919px;top:60px;width:18px;overflow:hidden">对齐</div>
<div class="t pt" style="left:945px;top:60px;width:25.5px;overflow:hidden">路径查</div>
<svg class="ico" style="left:0;top:0" width="1000" height="481" viewBox="0 0 1000 481">
<defs>
<linearGradient id="gwk" x1="0" x2="1"><stop offset="0" stop-color="#fff"/><stop offset="1" stop-color="#000"/></linearGradient>
<linearGradient id="gwb" x1="0" x2="1"><stop offset="0" stop-color="#e8f4fb"/><stop offset="1" stop-color="#0071bc"/></linearGradient>
<radialGradient id="gor"><stop offset="0" stop-color="#fff3c4"/><stop offset="0.55" stop-color="#fbb03b"/><stop offset="1" stop-color="#f7931e"/></radialGradient>
<pattern id="ppink" width="1.6" height="1.6" patternUnits="userSpaceOnUse"><rect width="1.6" height="1.6" fill="#fbd3e0"/><rect width="0.8" height="0.8" fill="#f07fa8"/><rect x="0.8" y="0.8" width="0.8" height="0.8" fill="#f59bbb"/></pattern>
<pattern id="pdot" width="1.8" height="1.8" patternUnits="userSpaceOnUse"><rect width="1.8" height="1.8" fill="#fdfdf6"/><rect width="0.9" height="0.9" fill="#d8d2b4"/><rect x="0.9" y="0.9" width="0.9" height="0.9" fill="#e9e2c0"/></pattern>
<pattern id="pblue" width="2.6" height="2.6" patternUnits="userSpaceOnUse"><rect width="2.6" height="2.6" fill="#2d7dc0"/><rect width="1.2" height="1.2" fill="#6aa8d6"/><rect x="1.4" y="1.5" width="1" height="1" fill="#1a5a98"/><rect x="1.6" y="0.2" width="0.7" height="0.7" fill="#9cc6e6"/></pattern>
<pattern id="pgrn" width="2.6" height="2.6" patternUnits="userSpaceOnUse"><rect width="2.6" height="2.6" fill="#a6d39a"/><rect width="1.3" height="1.3" fill="#f0e48e"/><rect x="1.3" y="1.3" width="1.3" height="1.3" fill="#6fbfc4"/><rect x="1.5" y="0.1" width="0.8" height="0.8" fill="#d7e9a8"/></pattern>
<linearGradient id="gr4" x1="0" x2="1"><stop offset="0" stop-color="#fff"/><stop offset="1" stop-color="#111"/></linearGradient>
</defs>
<!-- panel menu -->
<g fill="#9c9c9c"><rect x="987.4" y="63.4" width="7.8" height="1"/><rect x="987.4" y="65.2" width="7.8" height="1"/><rect x="987.4" y="67" width="7.8" height="1"/><rect x="987.4" y="68.8" width="7.8" height="1"/></g>
<!-- fill/stroke mini -->
<rect x="835.4" y="88.8" width="13.6" height="13" fill="#fff" stroke="#2a2a2a" stroke-width="0.6"/>
<rect x="839.4" y="92.6" width="5.6" height="5.4" fill="#535353" stroke="#2a2a2a" stroke-width="0.5"/>
<path d="M835.8 101.4 L848.6 89.2" stroke="#f0131a" stroke-width="1.5"/>
<rect x="828.2" y="81.2" width="12.4" height="12.6" fill="#00a99d" stroke="#d8d8d8" stroke-width="1"/>
<!-- view buttons -->
<rect x="960.6" y="81.4" width="34.6" height="15.6" rx="2" fill="#4a4a4a" stroke="#5e5e5e" stroke-width="0.8"/>
<rect x="978" y="81.4" width="17.2" height="15.6" rx="2" fill="#373737"/>
<g fill="#c8c8c8"><rect x="964.6" y="84.4" width="8.6" height="1.3"/><rect x="964.6" y="87.2" width="8.6" height="1.3"/><rect x="964.6" y="90" width="8.6" height="1.3"/><rect x="964.6" y="92.8" width="8.6" height="1.3"/></g>
<g fill="#dcdcdc"><rect x="982" y="84.4" width="2.8" height="2.8"/><rect x="985.6" y="84.4" width="2.8" height="2.8"/><rect x="989.2" y="84.4" width="2.8" height="2.8"/><rect x="982" y="88" width="2.8" height="2.8"/><rect x="985.6" y="88" width="2.8" height="2.8"/><rect x="989.2" y="88" width="2.8" height="2.8"/><rect x="982" y="91.6" width="2.8" height="2.8"/><rect x="985.6" y="91.6" width="2.8" height="2.8"/><rect x="989.2" y="91.6" width="2.8" height="2.8"/></g>
<!-- swatch list box -->
<rect x="827" y="105.8" width="168.2" height="77.4" fill="none" stroke="#5a5a5a" stroke-width="0.8"/>
<path d="M987.6 112.4 L989.8 110.2 L992 112.4 M987.6 176.6 L989.8 178.8 L992 176.6" fill="none" stroke="#5f5f5f" stroke-width="1"/>
<rect x="827.9" y="107.2" width="9.4" height="9.4" fill="#fff"/><path d="M828.1999999999999 116.30000000000001 L837.0 107.5" stroke="#f0131a" stroke-width="1.5"/>
<rect x="838.12" y="107.2" width="9.4" height="9.4" fill="#fff"/><circle cx="842.82" cy="111.9" r="2.6" fill="none" stroke="#555" stroke-width="0.7"/><path d="M842.82 107.8 V116.00000000000001 M838.72 111.9 H846.92" stroke="#555" stroke-width="0.7"/><path d="M838.12 110.2 H847.52 M838.12 113.60000000000001 H847.52 M841.12 107.2 V116.60000000000001 M844.52 107.2 V116.60000000000001" stroke="#bbb" stroke-width="0.5"/>
<rect x="848.34" y="107.2" width="9.4" height="9.4" fill="#ffffff"/>
<rect x="858.56" y="107.2" width="9.4" height="9.4" fill="#000000"/>
<rect x="868.78" y="107.2" width="9.4" height="9.4" fill="#ff0000"/>
<rect x="879.0" y="107.2" width="9.4" height="9.4" fill="#ffff00"/>
<rect x="889.22" y="107.2" width="9.4" height="9.4" fill="#00ff00"/>
<rect x="899.44" y="107.2" width="9.4" height="9.4" fill="#00ffff"/>
<rect x="909.66" y="107.2" width="9.4" height="9.4" fill="#0000ff"/>
<rect x="919.88" y="107.2" width="9.4" height="9.4" fill="#ff00ff"/>
<rect x="930.1" y="107.2" width="9.4" height="9.4" fill="#c1272d"/>
<rect x="940.32" y="107.2" width="9.4" height="9.4" fill="#ed1c24"/>
<rect x="950.54" y="107.2" width="9.4" height="9.4" fill="#f15a24"/>
<rect x="960.76" y="107.2" width="9.4" height="9.4" fill="#f7931e"/>
<rect x="970.98" y="107.2" width="9.4" height="9.4" fill="#fbb03b"/>
<rect x="827.9" y="117.3" width="9.4" height="9.4" fill="#fcee21"/>
<rect x="838.12" y="117.3" width="9.4" height="9.4" fill="#d9e021"/>
<rect x="848.34" y="117.3" width="9.4" height="9.4" fill="#8cc63f"/>
<rect x="858.56" y="117.3" width="9.4" height="9.4" fill="#39b54a"/>
<rect x="868.78" y="117.3" width="9.4" height="9.4" fill="#009245"/>
<rect x="879.0" y="117.3" width="9.4" height="9.4" fill="#006837"/>
<rect x="889.22" y="117.3" width="9.4" height="9.4" fill="#22b573"/>
<rect x="899.44" y="117.3" width="9.4" height="9.4" fill="#00a99d"/>
<rect x="909.66" y="117.3" width="9.4" height="9.4" fill="#29abe2"/>
<rect x="919.88" y="117.3" width="9.4" height="9.4" fill="#0071bc"/>
<rect x="930.1" y="117.3" width="9.4" height="9.4" fill="#2e3192"/>
<rect x="940.32" y="117.3" width="9.4" height="9.4" fill="#1b1464"/>
<rect x="950.54" y="117.3" width="9.4" height="9.4" fill="#662d91"/>
<rect x="960.76" y="117.3" width="9.4" height="9.4" fill="#93278f"/>
<rect x="970.98" y="117.3" width="9.4" height="9.4" fill="#9e005d"/>
<rect x="827.9" y="127.4" width="9.4" height="9.4" fill="#d4145a"/>
<rect x="838.12" y="127.4" width="9.4" height="9.4" fill="#ed1e79"/>
<rect x="848.34" y="127.4" width="9.4" height="9.4" fill="#c7b299"/>
<rect x="858.56" y="127.4" width="9.4" height="9.4" fill="#998675"/>
<rect x="868.78" y="127.4" width="9.4" height="9.4" fill="#736357"/>
<rect x="879.0" y="127.4" width="9.4" height="9.4" fill="#534741"/>
<rect x="889.22" y="127.4" width="9.4" height="9.4" fill="#c69c6d"/>
<rect x="899.44" y="127.4" width="9.4" height="9.4" fill="#a67c52"/>
<rect x="909.66" y="127.4" width="9.4" height="9.4" fill="#8c6239"/>
<rect x="919.88" y="127.4" width="9.4" height="9.4" fill="#754c24"/>
<rect x="930.1" y="127.4" width="9.4" height="9.4" fill="#603813"/>
<rect x="940.32" y="127.4" width="9.4" height="9.4" fill="#42210b"/>
<rect x="950.54" y="127.4" width="9.4" height="9.4" fill="url(#gwk)"/>
<rect x="960.76" y="127.4" width="9.4" height="9.4" fill="url(#gwb)"/>
<rect x="970.98" y="127.4" width="9.4" height="9.4" fill="url(#ppink)"/>
<rect x="827.9" y="137.6" width="9.4" height="9.4" fill="url(#gor)"/>
<rect x="838.12" y="137.6" width="9.4" height="9.4" fill="url(#pdot)"/>
<rect x="848.34" y="137.6" width="9.4" height="9.4" fill="url(#pblue)"/>
<rect x="858.56" y="137.6" width="9.4" height="9.4" fill="url(#pgrn)"/>
<rect x="898.94" y="116.8" width="10.4" height="10.4" fill="none" stroke="#e6e6e6" stroke-width="1"/><rect x="900.1400000000001" y="118.0" width="8.0" height="8.0" fill="none" stroke="#1a1a1a" stroke-width="0.9"/>
<path d="M828.5 151.5 H831.3 L832.1 152.70000000000002 H836.6999999999999 V157.9 H828.5 Z" fill="#bdbdbd"/><path d="M828.5 153.9 H836.6999999999999" stroke="#8c8c8c" stroke-width="0.6"/>
<rect x="838.12" y="149.3" width="9.4" height="9.4" fill="#000000"/>
<rect x="848.34" y="149.3" width="9.4" height="9.4" fill="#1a1a1a"/>
<rect x="858.56" y="149.3" width="9.4" height="9.4" fill="#333333"/>
<rect x="868.78" y="149.3" width="9.4" height="9.4" fill="#4d4d4d"/>
<rect x="879.0" y="149.3" width="9.4" height="9.4" fill="#666666"/>
<rect x="889.22" y="149.3" width="9.4" height="9.4" fill="#808080"/>
<rect x="899.44" y="149.3" width="9.4" height="9.4" fill="#999999"/>
<rect x="909.66" y="149.3" width="9.4" height="9.4" fill="#b3b3b3"/>
<rect x="919.88" y="149.3" width="9.4" height="9.4" fill="#cccccc"/>
<rect x="930.1" y="149.3" width="9.4" height="9.4" fill="#e6e6e6"/>
<rect x="940.32" y="149.3" width="9.4" height="9.4" fill="#f2f2f2"/>
<path d="M828.5 163.1 H831.3 L832.1 164.3 H836.6999999999999 V169.5 H828.5 Z" fill="#bdbdbd"/><path d="M828.5 165.5 H836.6999999999999" stroke="#8c8c8c" stroke-width="0.6"/>
<rect x="838.12" y="160.9" width="9.4" height="9.4" fill="#3fa9f5"/>
<rect x="848.34" y="160.9" width="9.4" height="9.4" fill="#7ac943"/>
<rect x="858.56" y="160.9" width="9.4" height="9.4" fill="#ff931e"/>
<rect x="868.78" y="160.9" width="9.4" height="9.4" fill="#ff1d25"/>
<rect x="879.0" y="160.9" width="9.4" height="9.4" fill="#ff7bac"/>
<rect x="889.22" y="160.9" width="9.4" height="9.4" fill="#bdccd4"/>
</svg>

<div class="ptabs" style="top:200.4px;height:19.4px"></div>
<div class="ptab on" style="left:823.6px;top:200.4px;width:30.6px;height:19.4px"></div>
<div class="abs pdv" style="left:885px;top:200.4px;height:19.4px"></div><div class="abs pdv" style="left:916.4px;top:200.4px;height:19.4px"></div>
<div class="t pt on" style="left:830.5px;top:205px">图层</div>
<div class="t pt" style="left:861.5px;top:205px">画板</div>
<div class="t pt" style="left:892px;top:205px">外观</div>
<div class="abs" style="left:828px;top:256px;width:167px;height:15px;background:#4f6781"></div>
<div class="t lt" style="left:898px;top:227px">图层 <span style="margin-left:2px">1</span></div>
<div class="t lt" style="left:913.6px;top:242px"><span class="br" style="margin-right:1px">&lt;</span>路径<span class="br" style="margin-left:1px">&gt;</span></div>
<div class="t lt" style="left:913.6px;top:257.5px"><span class="br" style="margin-right:1px">&lt;</span>编组<span class="br" style="margin-left:1px">&gt;</span></div>
<svg class="ico" style="left:0;top:0" width="1000" height="481" viewBox="0 0 1000 481">
<!-- swatch bottom icons -->
<g fill="#c8c8c8">
<rect x="831.2" y="187.4" width="1.3" height="7.6"/><rect x="833.4" y="187.4" width="1.6" height="7.6"/><path d="M836 187.8 L837.4 187.4 L840.2 194.6 L838.8 195 Z"/><path d="M841 195.2 H843.4 L842.2 196.6 Z"/>
<circle cx="853.6" cy="191.3" r="1.5"/><circle cx="857.6" cy="188.6" r="1.3"/><circle cx="857.6" cy="194" r="1.3"/>
<path d="M872.4 195 A3 3 0 0 1 872.6 189.6 A3.6 3.6 0 0 1 879.2 189.8 A2.7 2.7 0 0 1 879 195 Z"/>
<rect x="893.8" y="187.2" width="3.2" height="3.4"/><rect x="898" y="187.2" width="3.2" height="3.4"/><rect x="893.8" y="191.6" width="3.2" height="3.4"/><rect x="898" y="191.6" width="3.2" height="3.4"/><path d="M902 195.2 H904.4 L903.2 196.6 Z"/>
<path d="M932 188.2 H935.6 L936.6 189.4 H941.8 V195 H932 Z"/>
<path d="M952 187.2 H960 V195 H954.4 L952 192.6 Z"/>
<path d="M971.6 189.4 H977.8 L977.2 195.6 H972.2 Z M970.6 187.8 H978.8 V188.8 H970.6 Z M973.4 186.6 H976 V187.8 H973.4 Z"/>
</g>
<path d="M853.6 191.3 L857.6 188.6 M853.6 191.3 L857.6 194" stroke="#c8c8c8" stroke-width="0.8"/>
<path d="M868.4 192.6 H873.6 M871.8 190.8 L873.8 192.6 L871.8 194.4" fill="none" stroke="#535353" stroke-width="2.2"/>
<path d="M868.4 192.6 H873.4 M871.6 190.8 L873.6 192.6 L871.6 194.4" fill="none" stroke="#c8c8c8" stroke-width="1"/>
<rect x="913.8" y="187.6" width="7.8" height="7.6" fill="#6a6a6a" stroke="#c8c8c8" stroke-width="1"/><rect x="913.8" y="187.6" width="7.8" height="1.8" fill="#c8c8c8"/><path d="M916.6 190 V195 M914 192.4 H921.4" stroke="#c8c8c8" stroke-width="0.7"/>
<path d="M952.2 192.4 H954.6 V194.8" fill="none" stroke="#535353" stroke-width="0.8"/>
<path d="M973.6 190.4 V194.6 M975.8 190.4 V194.6" stroke="#535353" stroke-width="0.7"/>
<g fill="#535353"><rect x="895" y="188" width="0.8" height="1.6"/><rect x="899.2" y="188" width="0.8" height="1.6"/><rect x="895" y="192.6" width="0.8" height="1.6"/><rect x="899.2" y="192.6" width="0.8" height="1.6"/></g>
<!-- panel menu -->
<g fill="#9c9c9c"><rect x="987.4" y="208" width="7.8" height="1"/><rect x="987.4" y="209.8" width="7.8" height="1"/><rect x="987.4" y="211.6" width="7.8" height="1"/><rect x="987.4" y="213.4" width="7.8" height="1"/></g>
<!-- rows grid -->
<g stroke="#484848" stroke-width="0.8" fill="none">
<path d="M828 225.2 H995 M828 240.4 H995 M828 255.7 H995 M828 271 H995"/>
<path d="M828 225.2 V481 M843.4 225.2 V271 M858.4 225.2 V271 M968.6 225.2 V271 M995 225.2 V481"/>
</g>
<g fill="#4f80ff"><rect x="859.6" y="226" width="2.4" height="13.8"/><rect x="859.6" y="241.2" width="2.4" height="13.8"/><rect x="859.6" y="256.4" width="2.4" height="13.8"/></g>
<path d="M830.8 232.6 Q835.4 228.2 840.0 232.6 Q835.4 237.0 830.8 232.6 Z" fill="none" stroke="#d4d4d4" stroke-width="0.9"/><circle cx="835.4" cy="232.6" r="1.7" fill="#d4d4d4"/><path d="M830.8 247.8 Q835.4 243.4 840.0 247.8 Q835.4 252.20000000000002 830.8 247.8 Z" fill="none" stroke="#d4d4d4" stroke-width="0.9"/><circle cx="835.4" cy="247.8" r="1.7" fill="#d4d4d4"/><path d="M830.8 263.2 Q835.4 258.8 840.0 263.2 Q835.4 267.59999999999997 830.8 263.2 Z" fill="none" stroke="#d4d4d4" stroke-width="0.9"/><circle cx="835.4" cy="263.2" r="1.7" fill="#d4d4d4"/>
<path d="M868 231.4 L870.6 234 L873.2 231.4" fill="none" stroke="#e0e0e0" stroke-width="1.2"/>
<path d="M885.2 260.6 L887.8 263.2 L885.2 265.8" fill="none" stroke="#e0e0e0" stroke-width="1.2"/>
<!-- thumbs -->
<rect x="880.8" y="226.4" width="13" height="13" rx="1.2" fill="#fff" stroke="#1a1a1a" stroke-width="1.1"/>
<path d="M887.3 227.20000000000002 C891.0999999999999 227.20000000000002 891.6999999999999 231.0 890.9 232.8 L887.3 238.8 L883.6999999999999 232.8 C882.9 231.0 883.5 227.20000000000002 887.3 227.20000000000002 Z" fill="#00a99d"/>
<rect x="897.6" y="241.6" width="13" height="13" rx="1.2" fill="#fff" stroke="#1a1a1a" stroke-width="1.1"/>
<path d="M904.1 242.4 C907.9 242.4 908.5 246.2 907.7 248.0 L904.1 254.0 L900.5 248.0 C899.7 246.2 900.3000000000001 242.4 904.1 242.4 Z" fill="#00a99d"/>
<rect x="897.6" y="256.8" width="13" height="13" rx="1.2" fill="#fff" stroke="#1a1a1a" stroke-width="1.1"/>
<path d="M904.1 257.6 C907.9 257.6 908.5 261.40000000000003 907.7 263.2 L904.1 269.2 L900.5 263.2 C899.7 261.40000000000003 900.3000000000001 257.6 904.1 257.6 Z" fill="#ffdd00"/>
<path d="M904.1 257.6 C907.6 257.6 908.6 260.2 908.4 262 C906.6 260.6 901.6 260.6 899.8 262 C899.6 260.2 900.6 257.6 904.1 257.6 Z" fill="#2e3192"/>
<!-- targets -->
<circle cx="976.4" cy="232.8" r="2.7" fill="none" stroke="#d8d8d8" stroke-width="1"/>
<circle cx="976.4" cy="248" r="4" fill="none" stroke="#d8d8d8" stroke-width="0.9"/><circle cx="976.4" cy="248" r="2.2" fill="none" stroke="#d8d8d8" stroke-width="0.9"/>
<circle cx="976.4" cy="263.4" r="2.7" fill="none" stroke="#d8d8d8" stroke-width="1"/>
<rect x="984.6" y="231" width="3.4" height="3.4" fill="#4f80ff" stroke="#1c1c1c" stroke-width="0.6"/>
<rect x="984.2" y="245.2" width="5.6" height="5.6" fill="#4f80ff" stroke="#1c1c1c" stroke-width="0.6"/>
<path d="M990.4 225.4 H994.8 V229.8 Z" fill="#f0f0f0"/>
</svg>

<svg class="ico" style="left:0;top:0" width="1000" height="481" viewBox="0 0 1000 481">
<path d="M772 395.8 C753 395.8 739.2 410 739.2 427 C739.2 441 746 450 758 460 L787 482 H822 V464 H1000 V383 H993 C985 383 975 390 970 396.4 Z" fill="#535353"/>
<path d="M842.6 376.8 Q847 373.4 852.4 375.2" fill="none" stroke="#5e5e5e" stroke-width="1"/>
<path d="M990.6 389.4 Q994.6 385 1000.5 383.2 V406.6 Q995.6 398.4 990.6 389.4 Z" fill="#57d873"/>
<path d="M996 389 Q998.6 387.6 1000.5 387.4 V397 Q998 393 996 389 Z" fill="#8aeaa0"/>
<path d="M990.6 389.4 Q994.6 385 1000.5 383.2" fill="none" stroke="#f4f4f4" stroke-width="1.1"/>
</svg>

</body>
</html>
